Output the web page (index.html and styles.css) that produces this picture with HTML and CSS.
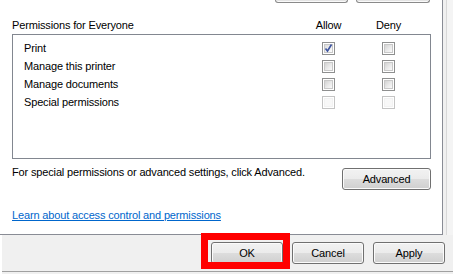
FILE: index.html
```html
<!DOCTYPE html>
<html>
<head>
<meta charset="utf-8">
<link rel="stylesheet" href="styles.css">
</head>
<body>
<div class="dialog">
  <div class="top">
    <div class="tabpage">
      <div class="peek">
        <div class="peek-btn w73"></div>
        <div class="peek-btn w74"></div>
      </div>
      <div class="grid header">
        <span class="name">Permissions for Everyone</span>
        <span class="col"><span>Allow</span></span>
        <span class="col"><span>Deny</span></span>
      </div>
      <div class="list">
        <div class="grid row">
          <span class="name">Print</span>
          <span class="cb checked"><svg width="9" height="9" viewBox="0 0 9 9"><path d="M1.5 4.5 L3.5 7 L7.5 0.5" fill="none" stroke="#3e55a0" stroke-width="1.6"/></svg></span>
          <span class="cb"></span>
        </div>
        <div class="grid row">
          <span class="name">Manage this printer</span>
          <span class="cb"></span>
          <span class="cb"></span>
        </div>
        <div class="grid row">
          <span class="name">Manage documents</span>
          <span class="cb"></span>
          <span class="cb"></span>
        </div>
        <div class="grid row">
          <span class="name">Special permissions</span>
          <span class="cb disabled"></span>
          <span class="cb disabled"></span>
        </div>
      </div>
      <div class="advrow">
        <span class="advtext">For special permissions or advanced settings, click Advanced.</span>
        <button class="btn adv">Advanced</button>
      </div>
      <a class="link" href="#">Learn about access control and permissions</a>
    </div>
    <div class="strip"></div>
  </div>
  <div class="bottombar">
    <button class="btn bb">OK</button>
    <button class="btn bb">Cancel</button>
    <button class="btn bb">Apply</button>
    <div class="highlight"></div>
  </div>
</div>
</body>
</html>
```

FILE: styles.css
```css
html, body {
  margin: 0;
  padding: 0;
  background: #ffffff;
  width: 453px;
  height: 274px;
  overflow: hidden;
}

body {
  font-family: "Liberation Sans", Arial, sans-serif;
  font-size: 11px;
  line-height: 13px;
  letter-spacing: -0.15px;
  color: #000;
}

.dialog {
  margin-left: 2px;
  width: 451px;
  height: 274px;
  background: #f0f0f0;
  position: relative;
}

.top {
  display: flex;
}

.tabpage {
  width: 430px;
  height: 234px;
  background: #fff;
  border-right: 1px solid #898c95;
  border-bottom: 1px solid #898c95;
  margin-left: -2px;
  padding-left: 12px;
  display: flex;
  flex-direction: column;
}

.strip {
  width: 10px;
  background: linear-gradient(to right, #f0f0f0 0 3px, #d8d8d8 3px 4px, #f4f4f4 4px);
}

.peek {
  height: 4px;
  display: flex;
  justify-content: flex-end;
  gap: 8px;
  padding-right: 12px;
}

.peek-btn {
  height: 3px;
  border: 1px solid #8a8a8a;
  border-top: none;
  border-radius: 0 0 3px 3px;
  background: #e4e4e4;
  box-shadow: inset 0 -1px 0 #fafafa;
  box-sizing: border-box;
}

.w73 { width: 73px; }
.w74 { width: 74px; }

.grid {
  display: grid;
  grid-template-columns: 1fr 13px 13px;
  column-gap: 47px;
  align-items: center;
}

.header {
  margin-top: 15px;
  height: 13px;
  width: 419px;
  box-sizing: border-box;
  padding-right: 36px;
}

.col {
  display: flex;
  justify-content: center;
  width: 13px;
  white-space: nowrap;
}

.list {
  margin-top: 2px;
  width: 419px;
  height: 125px;
  box-sizing: border-box;
  border: 1px solid #828790;
  padding: 4px 35px 0 11px;
}

.row {
  height: 18px;
  line-height: 18px;
}

.cb {
  width: 13px;
  height: 13px;
  box-sizing: border-box;
  border: 1px solid #8e8f8f;
  background: #fff;
  padding: 1px;
  display: flex;
}

.cb::before {
  content: "";
  flex: 1;
  border: 1px solid #c8c8c8;
  background: linear-gradient(135deg, #d3d3d3 0%, #e8e8e8 50%, #fafafa 100%);
}

.cb.checked {
  position: relative;
}

.cb.checked svg {
  position: absolute;
  left: 1px;
  top: 1px;
}

.cb.checked::before {
  background: linear-gradient(135deg, #dcdcdc 0%, #f0f0f0 60%, #fdfdfd 100%);
}

.cb.disabled {
  border-color: #c4c4c4;
}

.cb.disabled::before {
  border-color: #f2f2f2;
  background: #f8f8f8;
}

.advrow {
  margin-top: 7px;
  width: 419px;
  display: flex;
  justify-content: space-between;
  align-items: flex-start;
  height: 24px;
}

.btn {
  font-family: "Liberation Sans", Arial, sans-serif;
  font-size: 11px;
  letter-spacing: -0.15px;
  color: #000;
  height: 22px;
  padding: 0;
  border: 1px solid #707070;
  border-radius: 3px;
  background: linear-gradient(#f2f2f2 0%, #ebebeb 50%, #dddddd 50%, #cfcfcf 100%);
  box-shadow: inset 0 0 0 1px #fbfbfb;
  box-sizing: border-box;
}

.adv {
  margin-top: 2px;
  width: 89px;
}

.link {
  margin-top: 19px;
  color: #0066cc;
  text-decoration: underline;
  align-self: flex-start;
}

.bottombar {
  height: 37px;
  border-bottom: 1px solid #a0a0a0;
  display: flex;
  gap: 9px;
  padding: 7px 0 0 209px;
  box-sizing: border-box;
  position: relative;
}

.bb {
  width: 72px;
}

.highlight {
  position: absolute;
  left: 199px;
  top: -2px;
  width: 89px;
  height: 36px;
  box-sizing: border-box;
  border: 7px solid #ff0000;
}
```
